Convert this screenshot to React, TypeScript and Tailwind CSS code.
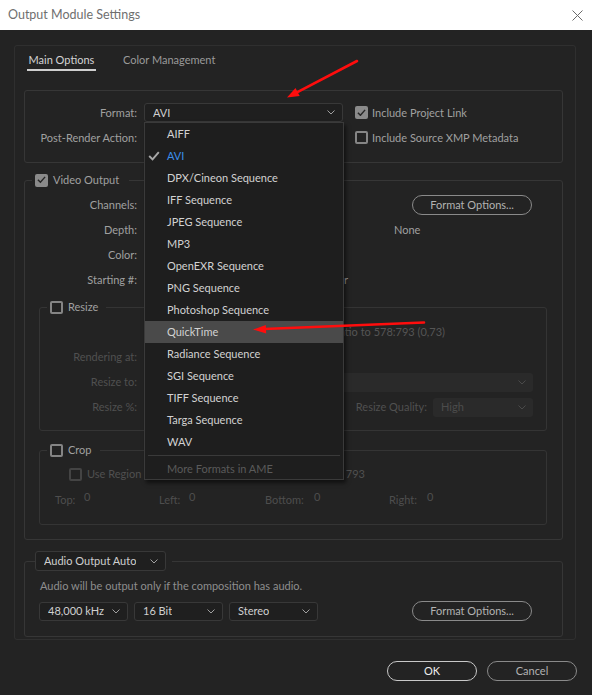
import clsx from 'clsx';

const formats = [
  'AIFF',
  'AVI',
  'DPX/Cineon Sequence',
  'IFF Sequence',
  'JPEG Sequence',
  'MP3',
  'OpenEXR Sequence',
  'PNG Sequence',
  'Photoshop Sequence',
  'QuickTime',
  'Radiance Sequence',
  'SGI Sequence',
  'TIFF Sequence',
  'Targa Sequence',
  'WAV',
];

function Chevron() {
  return (
    <svg width="8" height="5" viewBox="0 0 8 5" className="shrink-0">
      <polyline points="0.5,0.5 4,4 7.5,0.5" fill="none" stroke="currentColor" strokeWidth="1" />
    </svg>
  );
}

function Tick({ size = 9 }: { size?: number }) {
  return (
    <svg width={size} height={size * 0.8} viewBox="0 0 10 8">
      <polyline points="1,4.2 3.8,7 9,1" fill="none" stroke="currentColor" strokeWidth="1.6" />
    </svg>
  );
}

function Checkbox({ checked = false, disabled = false }: { checked?: boolean; disabled?: boolean }) {
  if (checked) {
    return (
      <span className="w-[13px] h-[13px] rounded-[2px] bg-[#8a8a8a] text-[#262626] flex items-center justify-center shrink-0">
        <Tick />
      </span>
    );
  }
  return (
    <span
      className={clsx(
        'w-[13px] h-[13px] rounded-[2px] border-2 shrink-0',
        disabled ? 'border-[#444444]' : 'border-[#858585]'
      )}
    />
  );
}

function Select({
  value = '',
  className,
  disabled = false,
}: {
  value?: string;
  className?: string;
  disabled?: boolean;
}) {
  return (
    <div
      className={clsx(
        'h-[19px] flex items-center justify-between pl-[8px] pr-[7px] rounded-[3px] shrink-0',
        disabled
          ? 'bg-[#2a2a2a] text-[#4c4c4c]'
          : 'bg-[#1f1f1f] border border-[#383838] text-[#cfcfcf]',
        className
      )}
    >
      <span className="truncate">{value}</span>
      <span className={disabled ? 'text-[#4a4a4a]' : 'text-[#a0a0a0]'}>
        <Chevron />
      </span>
    </div>
  );
}

function PillButton({ children, primary = false, className }: { children: string; primary?: boolean; className?: string }) {
  return (
    <button
      className={clsx(
        'h-[20px] rounded-full border-[1.5px] flex items-center justify-center',
        primary ? 'border-[#c8c8c8] text-[#ececec]' : 'border-[#8a8a8a] text-[#b2b2b2]',
        className
      )}
    >
      {children}
    </button>
  );
}

function FormatMenu() {
  return (
    <div className="absolute left-0 top-full z-20 w-[200px] bg-[#1e1e1e] border border-[#3a3a3a] shadow-[2px_3px_4px_rgba(0,0,0,0.55)]">
      {formats.map((f) => (
        <div
          key={f}
          className={clsx(
            'h-[22px] flex items-center',
            f === 'QuickTime' && 'bg-[#4a4a4a]',
            f === 'AVI' ? 'text-[#3b8eea]' : 'text-[#d2d2d2]'
          )}
        >
          <span className="w-[22px] pl-[3px] flex items-center text-[#a8a8a8]">
            {f === 'AVI' && <Tick size={12} />}
          </span>
          <span>{f}</span>
        </div>
      ))}
      <div className="mx-[3px] mt-[2px] mb-[2px] h-px bg-[#3a3a3a]" />
      <div className="h-[21px] flex items-center pl-[22px] text-[#5a5a5a]">More Formats in AME</div>
    </div>
  );
}

function Legend({ children, className }: { children: React.ReactNode; className?: string }) {
  return (
    <legend className={className}>
      <div className="h-[14px] flex items-center gap-[5px]">{children}</div>
    </legend>
  );
}

export default function App() {
  return (
    <div className="relative w-[592px] h-[695px] overflow-hidden bg-[#232323] text-[11px] leading-[16px] text-[#a0a0a0] [font-family:Lato,'Noto_Sans',sans-serif]">
      {/* Title bar */}
      <div className="h-[30px] bg-white flex items-center justify-between pl-[8px] pr-[9px]">
        <span className="text-[12.5px] text-[#6f6f6f]">Output Module Settings</span>
        <svg width="11" height="11" viewBox="0 0 11 11">
          <path d="M0.5 0.5 L10.5 10.5 M10.5 0.5 L0.5 10.5" stroke="#6a6a6a" strokeWidth="1" />
        </svg>
      </div>

      {/* Main panel */}
      <div className="ml-[14px] mt-[15px] w-[562px] h-[595px] border border-[#2f2f2f] rounded-[3px]">
        <div className="flex pt-[6px] pl-[12px]">
          <div className="w-[69px] whitespace-nowrap pl-[1.5px] pb-[1px] border-b-2 border-[#cfcfcf] text-[#d4d4d4]">
            Main Options
          </div>
          <div className="ml-[27px] whitespace-nowrap text-[#9a9a9a]">Color Management</div>
        </div>

        {/* Format */}
        <div className="mt-[19px] ml-[9px] w-[539px] h-[73px] border border-[#363636] rounded-[3px] pt-[12px]">
          <div className="flex items-center h-[19px]">
            <div className="w-[112px] text-right">Format:</div>
            <div className="relative ml-[7px]">
              <Select value="AVI" className="w-[199px]" />
              <FormatMenu />
            </div>
            <div className="ml-[12px] flex items-center gap-[4px]">
              <Checkbox checked />
              <span>Include Project Link</span>
            </div>
          </div>
          <div className="flex items-center h-[19px] mt-[6px]">
            <div className="w-[112px] text-right">Post-Render Action:</div>
            <Select className="ml-[7px] w-[199px]" />
            <div className="ml-[12px] flex items-center gap-[4px]">
              <Checkbox />
              <span>Include Source XMP Metadata</span>
            </div>
          </div>
        </div>

        {/* Video output */}
        <fieldset className="mt-[10px] ml-[9px] w-[539px] border border-[#363636] rounded-[3px] pb-[14px]">
          <Legend className="ml-[7px] pl-[3px] pr-[10px]">
            <Checkbox checked />
            <span>Video Output</span>
          </Legend>
          <div className="mt-[8px] flex flex-col gap-[5px]">
            <div className="flex items-center h-[20px]">
              <div className="w-[112px] text-right">Channels:</div>
              <Select className="ml-[7px] w-[200px]" />
              <PillButton className="ml-auto mr-[30px] w-[120px]">Format Options...</PillButton>
            </div>
            <div className="flex items-center h-[20px]">
              <div className="w-[112px] text-right">Depth:</div>
              <Select className="ml-[7px] w-[200px]" />
              <span className="ml-[50px]">None</span>
            </div>
            <div className="flex items-center h-[20px]">
              <div className="w-[112px] text-right">Color:</div>
              <Select className="ml-[7px] w-[200px]" />
            </div>
            <div className="flex items-center h-[20px]">
              <div className="w-[112px] text-right">Starting #:</div>
              <div className="ml-[7px] w-[204px] flex items-center justify-end gap-[5px]">
                <Checkbox checked />
                <span>Use Comp Frame Number</span>
              </div>
            </div>
          </div>

          {/* Resize */}
          <fieldset className="mt-[10px] ml-[14px] w-[508px] border border-[#343434] rounded-[3px] pb-[13px]">
            <Legend className="ml-[7px] pl-[3px] pr-[8px]">
              <Checkbox />
              <span>Resize</span>
            </Legend>
            <div className="mt-[8px] flex flex-col gap-[5px] text-[#505050]">
              <div className="flex items-center h-[20px]">
                <div className="w-[97px]" />
                <div className="ml-[7px] w-[301px] flex items-center justify-end gap-[5px] text-[#555555]">
                  <Checkbox disabled />
                  <span>Lock Aspect Ratio to 578:793 (0,73)</span>
                </div>
              </div>
              <div className="flex items-center h-[20px]">
                <div className="w-[97px] text-right">Rendering at:</div>
              </div>
              <div className="flex items-center h-[20px]">
                <div className="w-[97px] text-right">Resize to:</div>
                <Select disabled className="ml-auto mr-[13px] w-[233px]" />
              </div>
              <div className="flex items-center h-[20px]">
                <div className="w-[97px] text-right">Resize %:</div>
                <div className="ml-auto mr-[13px] flex items-center">
                  <span>Resize Quality:</span>
                  <Select disabled value="High" className="ml-[6px] w-[100px]" />
                </div>
              </div>
            </div>
          </fieldset>

          {/* Crop */}
          <fieldset className="mt-[12px] ml-[14px] w-[508px] border border-[#343434] rounded-[3px] pb-[14px]">
            <Legend className="ml-[7px] pl-[3px] pr-[8px]">
              <Checkbox />
              <span>Crop</span>
            </Legend>
            <div className="mt-[7px] h-[20px] flex items-center text-[#505050]">
              <div className="w-[325px] pl-[29px] flex items-center justify-between">
                <div className="flex items-center gap-[5px]">
                  <Checkbox disabled />
                  <span>Use Region of Interest</span>
                </div>
                <span>Final Size: 578 x 793</span>
              </div>
            </div>
            <div className="mt-[6px] h-[20px] flex items-center pl-[15px] text-[#4e4e4e]">
              <div className="w-[104px] flex">
                <span className="w-[29px]">Top:</span>
                <span className="-mt-[3px]">0</span>
              </div>
              <div className="w-[106px] flex">
                <span className="w-[30px]">Left:</span>
                <span className="-mt-[3px]">0</span>
              </div>
              <div className="w-[124px] flex">
                <span className="w-[49px]">Bottom:</span>
                <span className="-mt-[3px]">0</span>
              </div>
              <div className="flex">
                <span className="w-[38px]">Right:</span>
                <span className="-mt-[3px]">0</span>
              </div>
            </div>
          </fieldset>
        </fieldset>

        {/* Audio */}
        <fieldset className="mt-[11px] ml-[9px] w-[539px] border border-[#363636] rounded-[3px] pb-[15px]">
          <legend className="ml-[10px] pr-[6px]">
            <Select value="Audio Output Auto" className="w-[131px] h-[20px]" />
          </legend>
          <div className="mt-[7px] pl-[15px] text-[#8e8e8e]">
            Audio will be output only if the composition has audio.
          </div>
          <div className="mt-[7px] flex items-center pl-[14px] gap-[6px]">
            <Select value="48,000 kHz" className="w-[89px]" />
            <Select value="16 Bit" className="w-[89px]" />
            <Select value="Stereo" className="w-[89px]" />
            <PillButton className="ml-auto mr-[30px] w-[120px]">Format Options...</PillButton>
          </div>
        </fieldset>
      </div>

      {/* Dialog buttons */}
      <div className="mt-[21px] flex justify-end gap-[10px] pr-[15px]">
        <PillButton primary className="w-[90px]">OK</PillButton>
        <PillButton className="w-[90px]">Cancel</PillButton>
      </div>

      {/* Red annotation arrows */}
      <svg className="absolute left-0 top-0 z-30 pointer-events-none" width="592" height="695" viewBox="0 0 592 695">
        <line x1="357" y1="61" x2="296" y2="92.8" stroke="#ff0d0d" strokeWidth="2.6" strokeLinecap="round" />
        <polygon points="287,97.5 299.7,96 295.5,88" fill="#ff0d0d" />
        <line x1="424" y1="322.5" x2="264" y2="329" stroke="#ff0d0d" strokeWidth="2.6" strokeLinecap="round" />
        <polygon points="253,329.5 266.2,333.5 265.8,325" fill="#ff0d0d" />
      </svg>
    </div>
  );
}
